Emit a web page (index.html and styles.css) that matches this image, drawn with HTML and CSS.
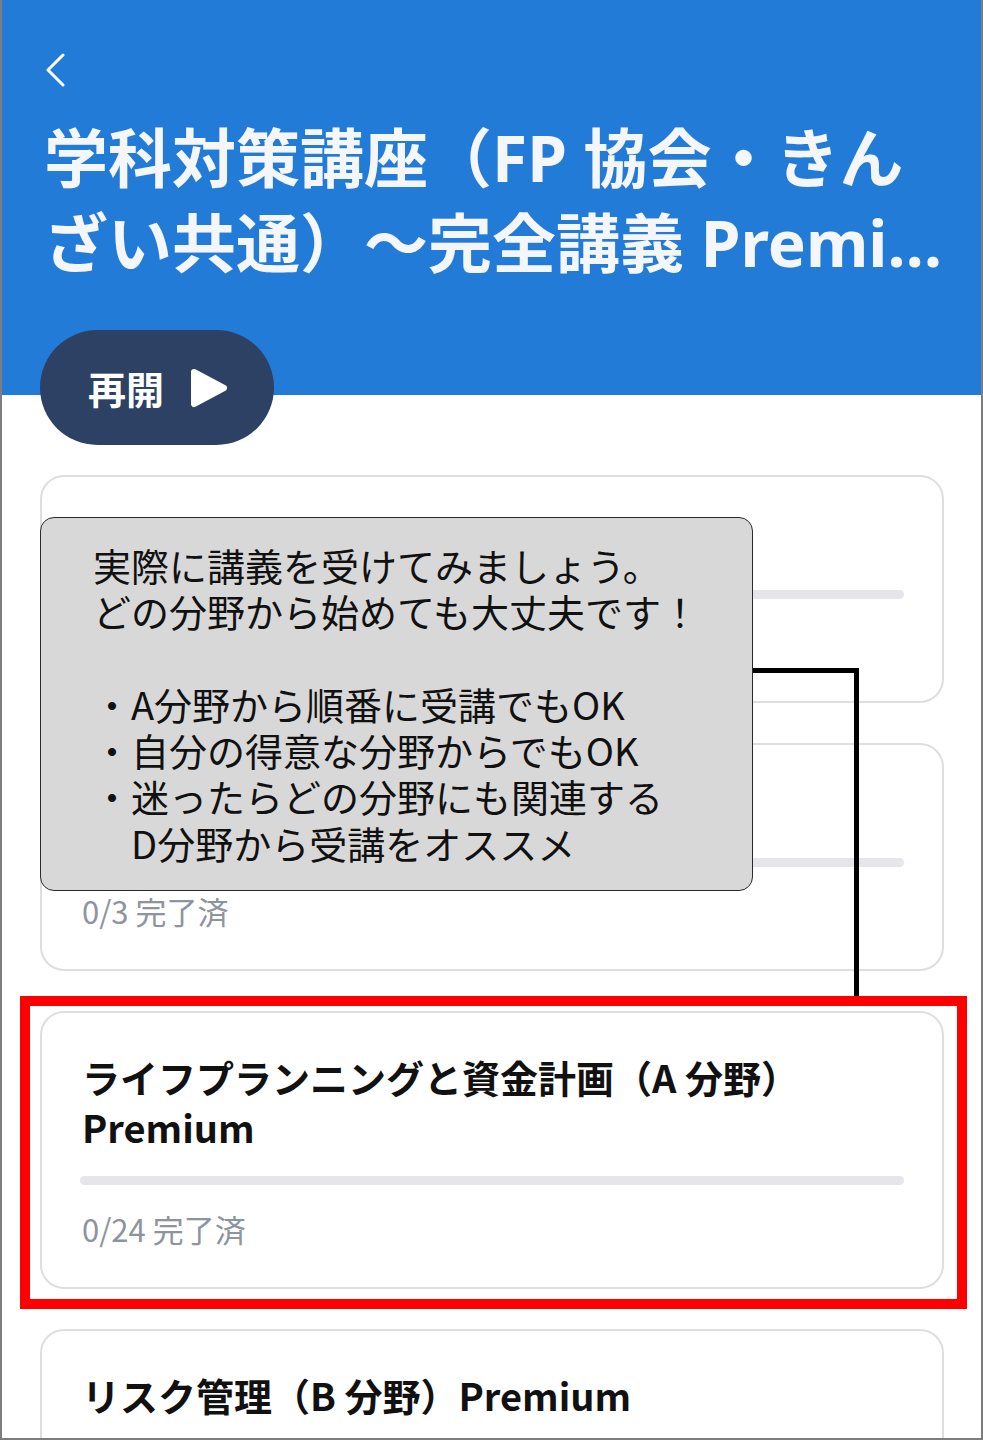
FILE: index.html
```html
<!DOCTYPE html>
<html lang="ja">
<head>
  <meta charset="UTF-8">
  <meta name="viewport" content="width=device-width, initial-scale=1.0">
  <title>学科対策講座</title>
  <link rel="stylesheet" href="styles.css">
</head>
<body>
  <div class="app">
    <header class="hero">
      <button class="back" aria-label="戻る">
        <svg width="20" height="34" viewBox="0 0 20 34">
          <polyline points="18,2 3,17 18,32" fill="none" stroke="#fff" stroke-width="3" stroke-linecap="round" stroke-linejoin="round"/>
        </svg>
      </button>
      <h1 class="hero-title">学科対策講座（FP 協会・きんざい共通）～完全講義 Premium</h1>
      <button class="resume">
        <span>再開</span>
        <svg width="38" height="40" viewBox="0 0 38 40">
          <polygon points="4,4 34,20 4,36" fill="#fff" stroke="#fff" stroke-width="6" stroke-linejoin="round"/>
        </svg>
      </button>
    </header>

    <main class="courses">
      <div class="card">
        <h2 class="card-title">ガイダンス</h2>
        <div class="bar"></div>
        <p class="count">0/2 完了済</p>
      </div>
      <div class="card">
        <h2 class="card-title">学科試験対策のポイント</h2>
        <div class="bar"></div>
        <p class="count">0/3 完了済</p>
      </div>
      <div class="card">
        <h2 class="card-title">ライフプランニングと資金計画（A 分野）Premium</h2>
        <div class="bar"></div>
        <p class="count">0/24 完了済</p>
      </div>
      <div class="card">
        <h2 class="card-title">リスク管理（B 分野）Premium</h2>
        <div class="bar"></div>
        <p class="count">0/18 完了済</p>
      </div>

      <!-- annotation -->
      <div class="tip">
        <p>実際に講義を受けてみましょう。</p>
        <p>どの分野から始めても大丈夫です！</p>
        <p>&nbsp;</p>
        <p class="bullet">・A分野から順番に受講でもOK</p>
        <p class="bullet">・自分の得意な分野からでもOK</p>
        <p class="bullet">・迷ったらどの分野にも関連する<br>D分野から受講をオススメ</p>
      </div>
      <div class="tip-line"></div>
      <div class="highlight"></div>
    </main>
  </div>
</body>
</html>
```

FILE: styles.css
```css
/* General */
* {
  box-sizing: border-box;
}

body {
  margin: 0;
  font-family: "Noto Sans CJK JP", "Noto Sans", sans-serif;
  background: #fff;
  overflow: hidden;
}

.app {
  position: relative;
  width: 983px;
  height: 1440px;
  overflow: hidden;
}

/* screenshot frame */
.app::after {
  content: "";
  position: absolute;
  inset: 0;
  border: 2px solid #7d7d7d;
  border-top: 0;
  pointer-events: none;
}

/* Header */
.hero {
  background: #227cd7;
  padding: 53px 40px 1px 44px;
}

.back {
  display: block;
  width: 20px;
  height: 34px;
  margin-left: 1px;
  padding: 0;
  border: none;
  background: none;
}

.back svg {
  display: block;
}

.hero-title {
  margin: 28px 0 0;
  color: #f4f6f9;
  font-family: "Noto Sans", "Noto Sans CJK JP", sans-serif;
  font-size: 64px;
  font-weight: 700;
  line-height: 85px;
  word-break: break-all;
  display: -webkit-box;
  -webkit-line-clamp: 2;
  -webkit-box-orient: vertical;
  overflow: hidden;
}

.resume {
  position: relative;
  z-index: 1;
  display: flex;
  align-items: center;
  gap: 26px;
  height: 115px;
  margin: 45px 0 -51px -4px;
  padding: 0 46px 0 48px;
  border: none;
  border-radius: 58px;
  background: #2c4164;
  color: #fff;
  font-family: inherit;
  font-size: 38px;
  font-weight: 700;
}

.resume svg {
  display: block;
}

/* Course list */
.courses {
  position: relative;
  display: flex;
  flex-direction: column;
  gap: 40px;
  padding: 80px 39px 0 40px;
}

.card {
  border: 2px solid #dedede;
  border-radius: 24px;
  padding: 39px 38px 36px;
  background: #fff;
}

.card-title {
  margin: 0 0 24px 2px;
  color: #111;
  font-size: 38px;
  font-weight: 700;
  line-height: 50px;
}

.bar {
  height: 9px;
  border-radius: 5px;
  background: #e5e5ea;
}

.count {
  margin: 22px 0 0 2px;
  color: #8e949e;
  font-size: 31px;
  line-height: 44px;
}

/* Annotation overlay */
.tip {
  position: absolute;
  left: 40px;
  top: 122px;
  width: 713px;
  height: 374px;
  padding: 24px 16px 0 52px;
  background: #d8d8d8;
  border: 1.5px solid #2a2a2a;
  border-radius: 14px;
  color: #111;
  font-size: 38px;
  line-height: 46.3px;
}

.tip p {
  margin: 0;
}

.tip .bullet {
  padding-left: 1em;
  text-indent: -1em;
}

.tip-line {
  position: absolute;
  left: 753px;
  top: 273px;
  width: 106px;
  height: 332px;
  border-top: 5px solid #000;
  border-right: 5px solid #000;
}

.highlight {
  position: absolute;
  left: 20px;
  top: 601px;
  width: 947px;
  height: 313px;
  border: 10px solid #ff0000;
}
```
